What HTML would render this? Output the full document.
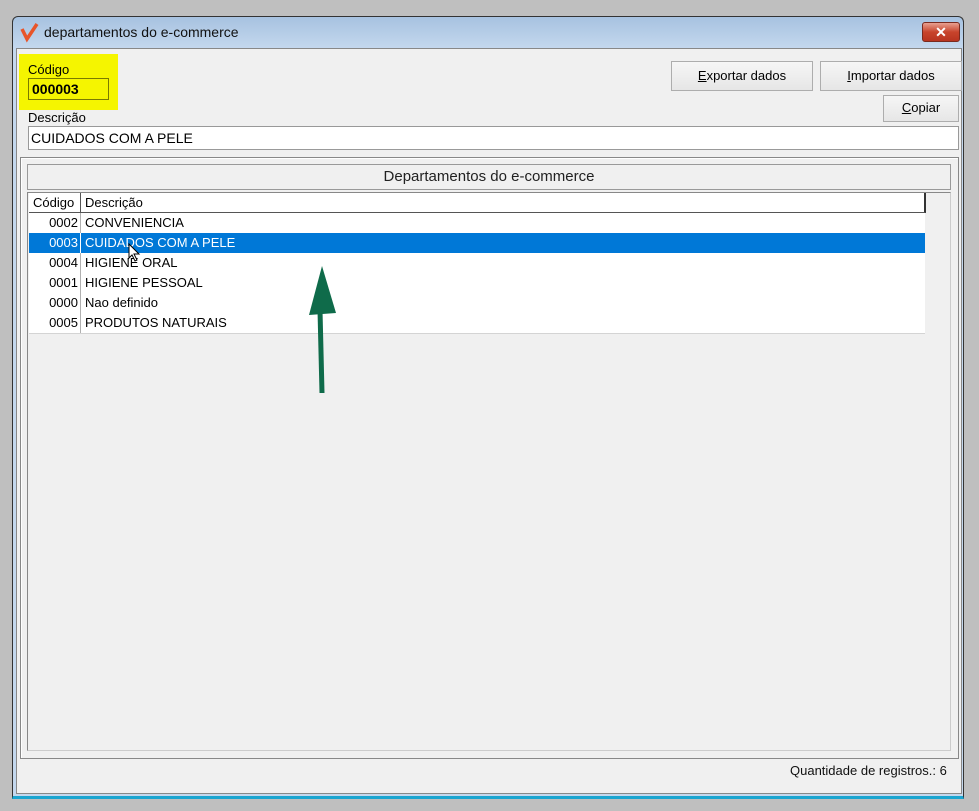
<!DOCTYPE html>
<html><head><meta charset="utf-8"><style>
body{margin:0;width:979px;height:811px;background:#bfbfbf;position:relative;overflow:hidden;font-family:"Liberation Sans",sans-serif;font-size:13px;color:#000}
.a{position:absolute;box-sizing:border-box}
.btn{background:linear-gradient(#f6f6f6,#e6e6e6);border:1px solid #adadad;text-align:center;line-height:24px;font-size:13px}
.row{position:absolute;left:29px;width:896px;height:20px;border-bottom:1px solid #d4d4d4;background:#fff;font-size:13px;line-height:20px}
.row .c{position:absolute;left:0;width:52px;text-align:right;border-right:1px solid #b0b0b0;height:20px;padding-right:2px;box-sizing:border-box}
.row .d{position:absolute;left:56px}
</style></head><body>
<div class="a" style="left:12px;top:16px;width:952px;height:783px;border:1px solid #333;border-radius:6px 6px 0 0;background:linear-gradient(#a7c2e0,#c4d8ee 32px,#c4d8ee);border-bottom:3px solid #1aa5d0"></div>
<svg class="a" style="left:19px;top:21px" width="22" height="22" viewBox="0 0 22 22"><path d="M3 8 L8 18 L18 3" stroke="#e8552a" stroke-width="3.5" fill="none"/></svg>
<div class="a" style="left:44px;top:24px;font-size:14px;color:#111">departamentos do e-commerce</div>
<div class="a" style="left:922px;top:22px;width:38px;height:20px;border:1px solid #7a2a1f;border-radius:3px;background:linear-gradient(#e8a090,#c8442c 50%,#b83420);color:#fff;text-align:center;font-weight:bold;font-size:14px;line-height:18px">✕</div>
<div class="a" style="left:16px;top:48px;width:946px;height:746px;background:#f0f0f0;border:1px solid #888"></div>
<div class="a" style="left:19px;top:54px;width:99px;height:56px;background:#f5f500"></div>
<div class="a" style="left:28px;top:62px;font-size:13px">Código</div>
<div class="a" style="left:28px;top:78px;width:81px;height:22px;border:1px solid #7a7a00;font-weight:bold;font-size:14px;line-height:20px;padding-left:3px">000003</div>
<div class="btn a" style="left:671px;top:61px;width:142px;height:30px;line-height:28px"><u>E</u>xportar dados</div>
<div class="btn a" style="left:820px;top:61px;width:142px;height:30px;line-height:28px"><u>I</u>mportar dados</div>
<div class="btn a" style="left:883px;top:95px;width:76px;height:27px"><u>C</u>opiar</div>
<div class="a" style="left:28px;top:110px">Descrição</div>
<div class="a" style="left:28px;top:126px;width:931px;height:24px;border:1px solid #999;background:#fff;line-height:22px;padding-left:2px;font-size:14px">CUIDADOS COM A PELE</div>
<div class="a" style="left:20px;top:157px;width:939px;height:602px;border:1px solid #888;box-shadow:inset 1px 1px #fff"></div>
<div class="a" style="left:27px;top:164px;width:924px;height:26px;border:1px solid #999;text-align:center;line-height:24px;font-size:15px;color:#222">Departamentos do e-commerce</div>
<div class="a" style="left:27px;top:192px;width:924px;height:559px;border:1px solid #888;border-right-color:#ccc;border-bottom-color:#ccc;background:#f0f0f0"></div>
<div class="a" style="left:29px;top:193px;width:897px;height:20px;background:#fff;border-bottom:1px solid #555;border-right:2px solid #333;font-size:13px;line-height:20px">
<span class="a" style="left:0;width:52px;height:19px;border-right:1px solid #555;padding-left:4px">Código</span><span class="a" style="left:56px">Descrição</span></div>
<div class="row" style="top:213px"><span class="c">0002</span><span class="d">CONVENIENCIA</span></div>
<div class="row" style="top:233px;background:#0078d7;color:#fff"><span class="c" style="border-color:#fff">0003</span><span class="d">CUIDADOS COM A PELE</span></div>
<div class="row" style="top:253px"><span class="c">0004</span><span class="d">HIGIENE ORAL</span></div>
<div class="row" style="top:273px"><span class="c">0001</span><span class="d">HIGIENE PESSOAL</span></div>
<div class="row" style="top:293px"><span class="c">0000</span><span class="d">Nao definido</span></div>
<div class="row" style="top:313px"><span class="c">0005</span><span class="d">PRODUTOS NATURAIS</span></div>
<svg class="a" style="left:128px;top:243px" width="14" height="20" viewBox="0 0 14 20"><path d="M1 1 L1 15 L4 12 L7 18 L9 17 L6 11 L11 11 Z" fill="#fff" stroke="#000" stroke-width="1"/></svg>
<svg class="a" style="left:300px;top:260px" width="50" height="140" viewBox="0 0 50 140"><path d="M22 133 L20 50" stroke="#0f6b4a" stroke-width="5" fill="none"/><path d="M22 6 L9 55 L36 53 Z" fill="#0f6b4a"/></svg>
<div class="a" style="left:790px;top:763px;font-size:13px;color:#111">Quantidade de registros.: 6</div>
</body></html>
